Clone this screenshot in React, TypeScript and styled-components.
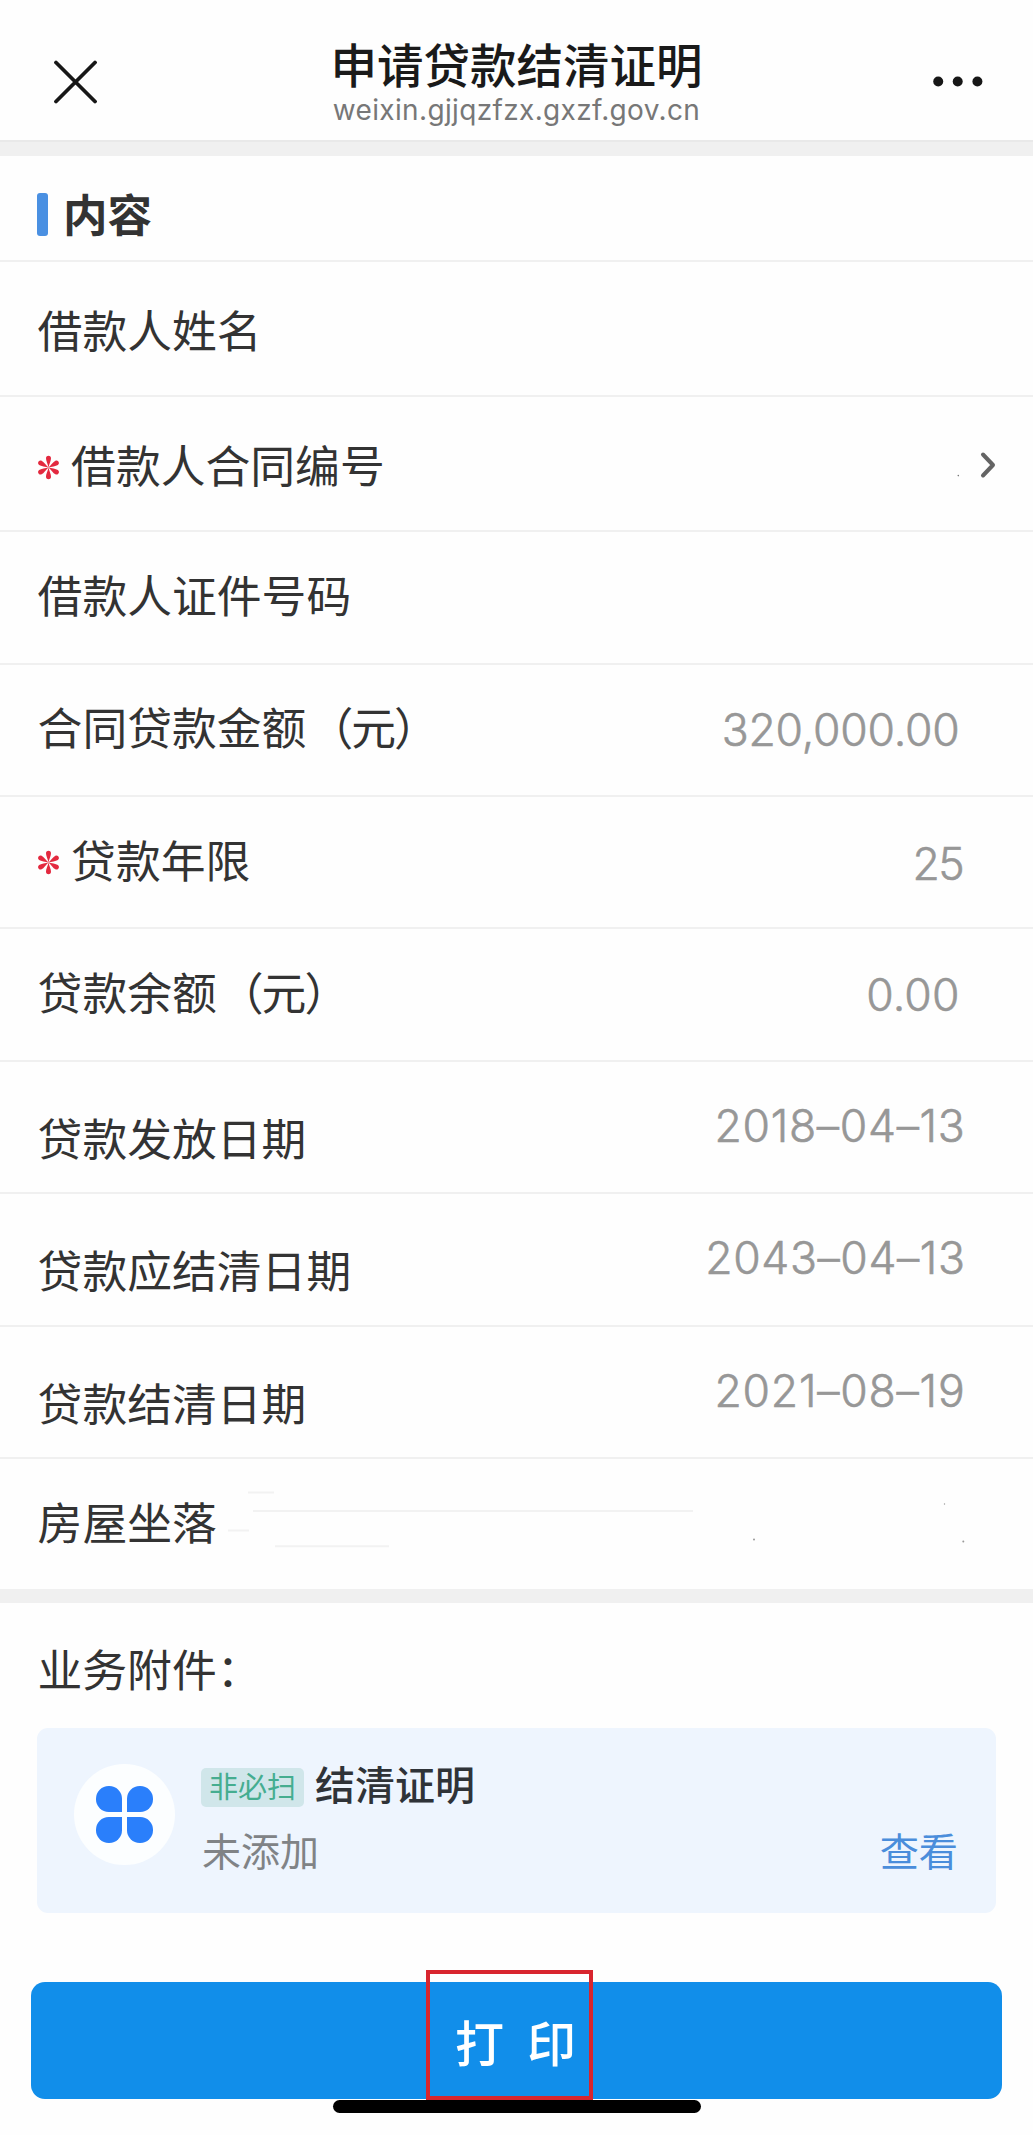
import React from "react";
import styled, { createGlobalStyle } from "styled-components";

const cjk = `"Noto Sans CJK SC", "Noto Sans", sans-serif`;
const latin = `Inter, "Liberation Sans", "Noto Sans CJK SC", sans-serif`;

const GlobalStyle = createGlobalStyle`
  * { box-sizing: border-box; }
  body { margin: 0; background: #fefefe; font-family: ${cjk}; color: #333; }
`;

const Page = styled.main`
  width: 1033px;
  height: 2135px;
  display: flex;
  flex-direction: column;
  overflow: hidden;
  background: #fefefe;
`;

const Header = styled.header`
  height: 142px;
  flex: none;
  display: grid;
  grid-template-columns: 150px 1fr 150px;
  border-bottom: 2px solid #e9e9e9;
`;

const HeaderAction = styled.button<{ $end?: boolean }>`
  display: flex;
  align-items: flex-start;
  justify-content: ${(p) => (p.$end ? "flex-end" : "flex-start")};
  padding: ${(p) => (p.$end ? "76px 50px 0 0" : "60px 0 0 53px")};
  border: 0;
  background: none;
`;

const Titles = styled.div`
  display: flex;
  flex-direction: column;
  align-items: center;
`;

const Title = styled.h1`
  margin: 39px 0 0;
  font-size: 46.5px;
  line-height: 47px;
  font-weight: 500;
  color: #1a1a1a;
  white-space: nowrap;
`;

const Host = styled.div`
  margin-top: 7px;
  font-family: ${latin};
  font-size: 28px;
  line-height: 34px;
  letter-spacing: 0.35px;
  color: #777;
`;

const Band = styled.div<{ $h: number }>`
  height: ${(p) => p.$h}px;
  flex: none;
  background: #f0f0f0;
`;

const SectionHead = styled.h2`
  height: 106px;
  flex: none;
  margin: 0;
  padding: 37px 0 0 37px;
  display: flex;
  align-items: flex-start;
  gap: 15px;
  border-bottom: 2px solid #f0f0f0;
  font-size: 44.5px;
  line-height: 40px;
  font-weight: 700;
`;

const Accent = styled.span`
  width: 11px;
  height: 43px;
  border-radius: 3px;
  background: #4a90e2;
`;

const Row = styled.div<{ $h: number; $last?: boolean }>`
  position: relative;
  height: ${(p) => p.$h}px;
  flex: none;
  display: flex;
  align-items: flex-start;
  justify-content: space-between;
  padding: 0 36px 0 37.6px;
  border-bottom: ${(p) => (p.$last ? "0" : "2px solid #f0f0f0")};
`;

const Label = styled.div<{ $top: number }>`
  display: flex;
  padding-top: ${(p) => p.$top}px;
  font-size: 44.8px;
  line-height: 45px;
  white-space: nowrap;
`;

const Bracket = styled.span<{ $shift: number }>`
  margin-left: ${(p) => p.$shift}px;
  margin-right: ${(p) => -p.$shift}px;
`;

const Required = styled.svg`
  width: 23px;
  height: 25px;
  margin: 13.5px 11.5px 0 -1px;
`;

const Value = styled.div<{ $top: number; $end: number; $gap: number }>`
  padding-top: ${(p) => p.$top}px;
  margin-right: ${(p) => p.$end}px;
  font-family: ${latin};
  font-size: 44.5px;
  line-height: 46px;
  font-weight: 300;
  -webkit-text-stroke: 0.6px #979797;
  letter-spacing: ${(p) => p.$gap}px;
  color: #979797;
`;

const Chevron = styled.svg`
  width: 18px;
  height: 30px;
  margin-top: 53px;
`;

const Traces = styled.svg`
  position: absolute;
  left: 0;
  top: 0;
  width: 1033px;
  height: 130px;
`;

const AttachTitle = styled.h2`
  margin: 42px 0 0 37.5px;
  font-size: 44.8px;
  line-height: 45px;
  font-weight: 400;
`;

const Card = styled.section`
  height: 185px;
  flex: none;
  margin: 38px 37px 0 37px;
  padding: 36px 38px 0 37px;
  display: flex;
  align-items: flex-start;
  border-radius: 11px;
  background: #eef5fe;
`;

const IconDisc = styled.div`
  width: 101px;
  height: 101px;
  border-radius: 50%;
  background: #fcfeff;
  display: grid;
  grid-template-columns: 25.5px 25.5px;
  grid-template-rows: 25.5px 25.5px;
  gap: 5.6px;
  place-content: center;
`;

const Petal = styled.span<{ $corner: string }>`
  background: #2a7ffb;
  border-radius: ${(p) => p.$corner};
`;

const CardText = styled.div`
  flex: 1;
  margin-left: 26px;
`;

const CardHead = styled.div`
  display: flex;
  align-items: flex-start;
  margin-top: 4px;
`;

const Tag = styled.span`
  width: 103px;
  height: 39px;
  border-radius: 5px;
  background: #d0e6ea;
  color: #45ad90;
  font-size: 29px;
  line-height: 35px;
  text-align: center;
`;

const CardName = styled.span`
  margin: -5px 0 0 11px;
  font-size: 40px;
  line-height: 40px;
  font-weight: 500;
  color: #2f3338;
`;

const CardStatus = styled.div`
  margin: 23px 0 0 1px;
  font-size: 39px;
  line-height: 39px;
  color: #808386;
`;

const ViewLink = styled.a`
  margin-top: 66px;
  font-size: 39.2px;
  line-height: 39px;
  color: #4a8ddb;
`;

const PrintButton = styled.button`
  position: relative;
  width: 971px;
  height: 117px;
  flex: none;
  margin: 69px 0 0 31px;
  padding: 0 2px 0 0;
  border: 0;
  border-radius: 14px;
  background: #118eea;
  color: #fff;
  font-family: ${cjk};
  font-size: 49px;
  font-weight: 500;
  line-height: 118px;
  word-spacing: 12px;
`;

const Highlight = styled.span`
  position: absolute;
  left: 395px;
  top: -12px;
  width: 167px;
  height: 130px;
  border: 4px solid #d8252e;
`;

const HomeIndicator = styled.div`
  width: 368px;
  height: 13px;
  flex: none;
  margin: 1px auto 0;
  border-radius: 7px;
  background: #000;
`;

type Field = {
  label: string;
  unit?: string;
  h: number;
  top: number;
  required?: boolean;
  value?: string;
  valueTop?: number;
  end?: number;
  gap?: number;
  picker?: boolean;
  redacted?: boolean;
};

const fields: Field[] = [
  { label: "借款人姓名", h: 135, top: 44 },
  { label: "借款人合同编号", h: 135, top: 44, required: true, picker: true },
  { label: "借款人证件号码", h: 133, top: 39 },
  { label: "合同贷款金额", unit: "元", h: 132, top: 38, value: "320,000.00", valueTop: 42, end: 37.5, gap: -0.2 },
  { label: "贷款年限", h: 132, top: 39, required: true, value: "25", valueTop: 44, end: 34, gap: -1.6 },
  { label: "贷款余额", unit: "元", h: 133, top: 39, value: "0.00", valueTop: 43, end: 37.5, gap: 0.1 },
  { label: "贷款发放日期", h: 132, top: 52, value: "2018–04–13", valueTop: 41, end: 31.5, gap: 0.7 },
  { label: "贷款应结清日期", h: 133, top: 52, value: "2043–04–13", valueTop: 41, end: 31.5, gap: 0.6 },
  { label: "贷款结清日期", h: 132, top: 52, value: "2021–08–19", valueTop: 41, end: 31.5, gap: 0.8 },
  { label: "房屋坐落", h: 130, top: 39, redacted: true },
];

function RequiredMark() {
  return (
    <Required viewBox="-11.5 -12.5 23 25" aria-hidden>
      {[0, 60, 120, 180, 240, 300].map((a) => (
        <path
          key={a}
          d="M0 0C-0.6 -3 -2.7 -7 -2.5 -9.4C-2.2 -12.4 2.2 -12.4 2.5 -9.4C2.7 -7 0.6 -3 0 0Z"
          fill="#e3293f"
          transform={`rotate(${a})`}
        />
      ))}
    </Required>
  );
}

export default function App() {
  return (
    <>
      <GlobalStyle />
      <Page>
        <Header>
          <HeaderAction aria-label="关闭">
            <svg width="44" height="44" viewBox="0 0 44 44">
              <path d="M3 2.5L42 41.5M42 2.5L3 41.5" stroke="#171717" strokeWidth="3.8" strokeLinecap="round" />
            </svg>
          </HeaderAction>
          <Titles>
            <Title>申请贷款结清证明</Title>
            <Host>weixin.gjjqzfzx.gxzf.gov.cn</Host>
          </Titles>
          <HeaderAction $end aria-label="更多">
            <svg width="50" height="11" viewBox="0 0 50 11">
              <g fill="#171717">
                <circle cx="5.2" cy="5.5" r="5" />
                <circle cx="24.7" cy="5.5" r="5" />
                <circle cx="44.4" cy="5.5" r="5" />
              </g>
            </svg>
          </HeaderAction>
        </Header>
        <Band $h={14} />
        <SectionHead>
          <Accent />
          内容
        </SectionHead>
        {fields.map((f) => (
          <Row key={f.label} $h={f.h} $last={f.redacted}>
            <Label $top={f.top}>
              {f.required && <RequiredMark />}
              <span>
                {f.label}
                {f.unit && (
                  <>
                    <Bracket $shift={2}>（</Bracket>
                    {f.unit}
                    <Bracket $shift={-2}>）</Bracket>
                  </>
                )}
              </span>
            </Label>
            {f.value && (
              <Value $top={f.valueTop ?? 42} $end={f.end ?? 0} $gap={f.gap ?? 0}>
                {f.value}
              </Value>
            )}
            {f.picker && (
              <>
                <Traces viewBox="0 0 1033 130">
                  <circle cx="958.3" cy="78.6" r="0.8" fill="#777" />
                </Traces>
                <Chevron viewBox="0 0 18 30" fill="none">
                  <path d="M4 4.5L14 15L4 25.5" stroke="#646464" strokeWidth="4" strokeLinecap="round" strokeLinejoin="round" />
                </Chevron>
              </>
            )}
            {f.redacted && (
              <Traces viewBox="0 0 1033 130">
                <path d="M248 33.5H274M253 52H693M228 71.5H249M275 87.3H389" stroke="#f2f2f2" strokeWidth="2" />
                <g fill="#999">
                  <circle cx="754" cy="80.5" r="1" />
                  <circle cx="944.5" cy="45" r="0.7" />
                  <circle cx="963.3" cy="82.5" r="1" />
                </g>
              </Traces>
            )}
          </Row>
        ))}
        <Band $h={14} />
        <AttachTitle>业务附件：</AttachTitle>
        <Card>
          <IconDisc>
            <Petal $corner="50% 50% 0 50%" />
            <Petal $corner="50% 50% 50% 0" />
            <Petal $corner="50% 0 50% 50%" />
            <Petal $corner="0 50% 50% 50%" />
          </IconDisc>
          <CardText>
            <CardHead>
              <Tag>非必扫</Tag>
              <CardName>结清证明</CardName>
            </CardHead>
            <CardStatus>未添加</CardStatus>
          </CardText>
          <ViewLink>查看</ViewLink>
        </Card>
        <PrintButton>
          打 印
          <Highlight />
        </PrintButton>
        <HomeIndicator />
      </Page>
    </>
  );
}
